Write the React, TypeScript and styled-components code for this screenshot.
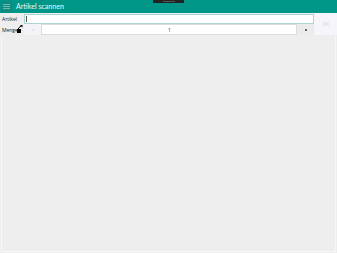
import React from "react";
import styled, { createGlobalStyle } from "styled-components";

const GlobalStyle = createGlobalStyle`
  html, body { margin: 0; padding: 0; background: #eeeeee; }
  body { font-family: "Open Sans", "Noto Sans", sans-serif; }
  * { box-sizing: border-box; }
`;

const Page = styled.div`
  display: flex;
  flex-direction: column;
  width: 337px;
  height: 253px;
  background: #eeeeee;
`;

const Header = styled.header`
  position: relative;
  display: flex;
  align-items: center;
  gap: 4px;
  height: 13px;
  padding-left: 1px;
  background: #009688;
`;

const MenuButton = styled.div`
  width: 11px;
  height: 11px;
  display: flex;
  align-items: center;
  justify-content: center;
  background: #138a7f;
`;

const Title = styled.div`
  color: #eef8f7;
  font-family: "Lato", "Open Sans", sans-serif;
  font-weight: 400;
  font-size: 7.1px;
  line-height: 13px;
  white-space: nowrap;
`;

const Notch = styled.div`
  position: absolute;
  left: 153px;
  top: 0;
  width: 31px;
  height: 3px;
  background: #222222;
  display: flex;
  justify-content: center;
  align-items: center;
  &::after {
    content: "";
    width: 12px;
    height: 1px;
    background: #555555;
  }
`;

const Form = styled.div`
  display: grid;
  grid-template-columns: 24px 1fr 23px;
  grid-template-rows: 11px 11px;
`;

const Label = styled.div`
  display: flex;
  align-items: center;
  padding-left: 2px;
  font-size: 5px;
  color: #222;
  position: relative;
`;

const TextInput = styled.div<{ $focused?: boolean; $center?: boolean }>`
  height: ${(p) => (p.$focused ? "10px" : "11px")};
  margin-top: ${(p) => (p.$focused ? "1px" : "0")};
  background: #ffffff;
  border: 1px solid ${(p) => (p.$focused ? "#a9d8d3" : "#dcdcdc")};
  display: flex;
  align-items: center;
  justify-content: ${(p) => (p.$center ? "center" : "flex-start")};
  padding-left: 1px;
  font-size: 5px;
  color: #333;
  flex: 1;
`;

const Caret = styled.div`
  width: 1px;
  height: 6px;
  background: #555;
`;

const OkButton = styled.div`
  grid-column: 3;
  grid-row: 1 / span 2;
  background: #f6f6fa;
  color: #cfcfd6;
  font-size: 5px;
  display: flex;
  align-items: center;
  justify-content: center;
`;

const QtyRow = styled.div`
  display: flex;
  height: 11px;
`;

const SideButton = styled.div<{ $w: number; $bg: string }>`
  width: ${(p) => p.$w}px;
  background: ${(p) => p.$bg};
  display: flex;
  align-items: center;
  justify-content: center;
`;

const Dot = styled.div<{ $c: string }>`
  width: 2px;
  height: 2px;
  background: ${(p) => p.$c};
`;

const Cursor = styled.svg`
  position: absolute;
  left: 17px;
  top: 1px;
`;

const Panel = styled.div`
  flex: 1;
  margin: 1px 1px 1px 1px;
  border: 1px solid #f8f8f8;
  border-top: none;
  background: #eeeeee;
`;

export default function App() {
  return (
    <>
      <GlobalStyle />
      <Page>
        <Header>
          <MenuButton>
            <svg width="7" height="5" viewBox="0 0 7 5">
              <rect x="0" y="0" width="7" height="1" fill="#6fbab2" />
              <rect x="0" y="2" width="7" height="1" fill="#6fbab2" />
              <rect x="0" y="4" width="7" height="1" fill="#6fbab2" />
            </svg>
          </MenuButton>
          <Title>Artikel scannen</Title>
          <Notch />
        </Header>
        <Form>
          <Label>Artikel</Label>
          <TextInput $focused>
            <Caret />
          </TextInput>
          <OkButton>OK</OkButton>
          <Label>
            Menge
            <Cursor width="6" height="8" viewBox="0 0 6 8">
              <path d="M1.5 5 L1.5 3 L5 0.5" stroke="#000" strokeWidth="1" fill="none" />
              <path d="M3 0 L5.5 0 L5.5 2.5 Z" fill="#000" />
              <rect x="0" y="4" width="4" height="4" fill="#000" />
            </Cursor>
          </Label>
          <QtyRow>
            <SideButton $w={17} $bg="#f4f4f8">
              <Dot $c="#e4e4ea" />
            </SideButton>
            <TextInput $center>1</TextInput>
            <SideButton $w={17} $bg="#ebebeb">
              <Dot $c="#666" />
            </SideButton>
          </QtyRow>
        </Form>
        <Panel />
      </Page>
    </>
  );
}
